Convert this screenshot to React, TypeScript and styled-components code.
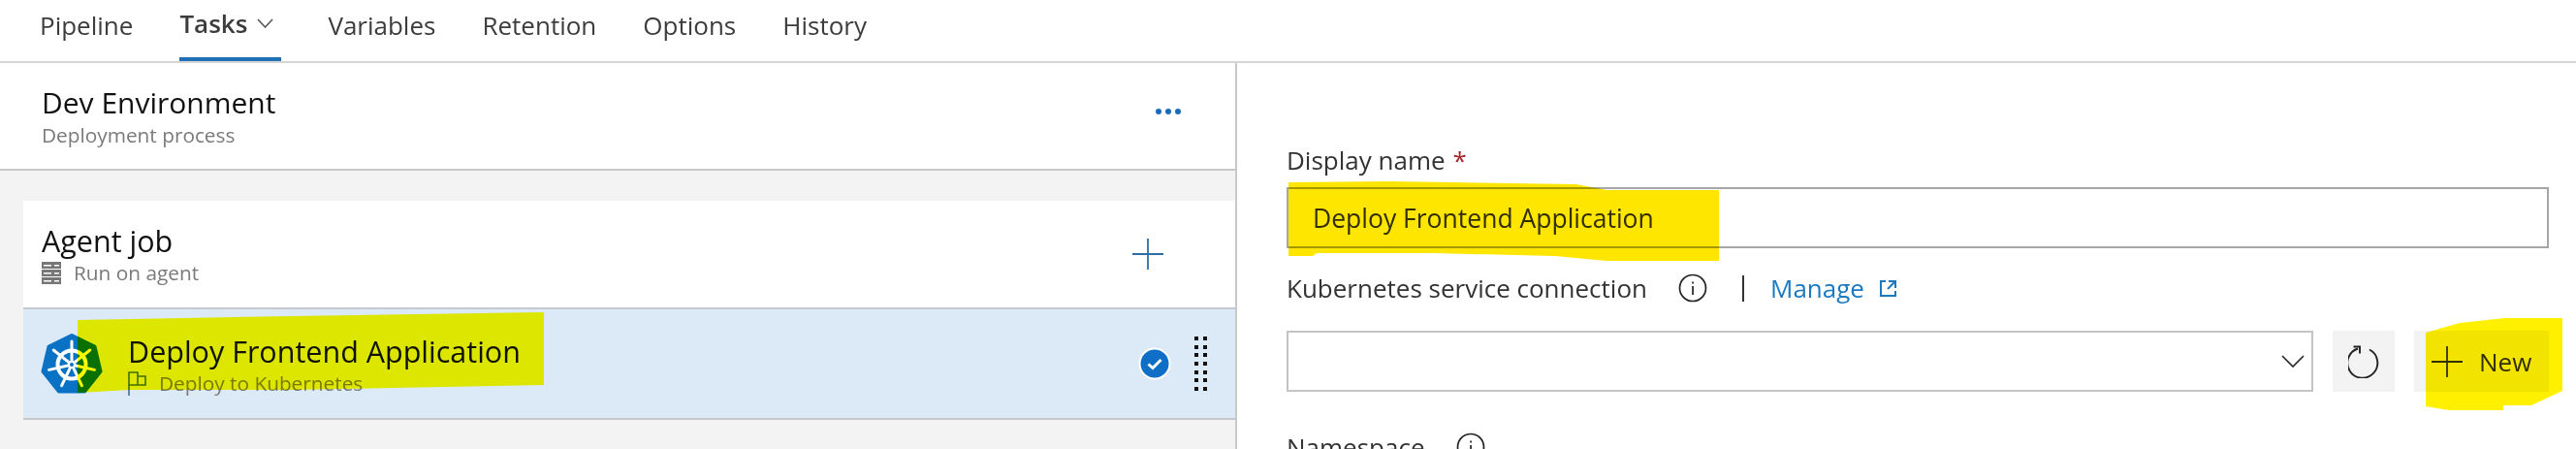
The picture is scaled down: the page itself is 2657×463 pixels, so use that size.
import React from 'react';
import styled, { createGlobalStyle } from 'styled-components';

const GlobalStyle = createGlobalStyle`
  html, body { margin: 0; background: #fff; }
  * { box-sizing: border-box; }
`;

const Page = styled.div`
  position: relative;
  width: 2657px;
  height: 463px;
  overflow: hidden;
  display: flex;
  flex-direction: column;
  background: #fff;
  font-family: 'Open Sans', 'Noto Sans', sans-serif;
  color: #333;
`;

const Nav = styled.nav`
  flex: none;
  height: 65px;
  display: flex;
  gap: 48px;
  padding-left: 41px;
  border-bottom: 2px solid #d4d4d4;
`;

const Tab = styled.div<{ $active?: boolean }>`
  height: 63px;
  display: flex;
  align-items: center;
  gap: 10px;
  padding: 0 ${p => (p.$active ? '8px' : '0')} 12px 0;
  font-size: 26px;
  font-weight: ${p => (p.$active ? 600 : 400)};
  color: #3c3c3c;
  border-bottom: ${p => (p.$active ? '4px solid #1f70b7' : 'none')};
`;

const Body = styled.div`
  flex: 1;
  min-height: 0;
  display: flex;
`;

const LeftPanel = styled.section`
  flex: none;
  width: 1276px;
  display: flex;
  flex-direction: column;
  background: #f3f3f3;
  border-right: 2px solid #c8c8c8;
`;

const ProcessHeader = styled.header`
  flex: none;
  height: 111px;
  display: flex;
  align-items: flex-start;
  justify-content: space-between;
  padding: 22px 56px 0 43px;
  background: #fff;
  border-bottom: 2px solid #c8c8c8;
`;

const Title = styled.div`
  font-size: 30.5px;
  line-height: 38px;
  color: #111;
`;

const EnvironmentTitle = styled(Title)`
  font-size: 30px;
`;

const Sub = styled.div`
  display: flex;
  align-items: center;
  gap: 13px;
  font-size: 20.8px;
  line-height: 28px;
  color: #7a7a7a;
`;

const MoreDots = styled.div`
  display: flex;
  gap: 4px;
  margin-top: 25px;
`;

const Dot = styled.span`
  width: 6px;
  height: 6px;
  border-radius: 50%;
  background: #1a6cb8;
`;

const Tasks = styled.div`
  flex: none;
  margin: 31px 0 0 24px;
  display: flex;
  flex-direction: column;
`;

const JobRow = styled.div`
  flex: none;
  height: 112px;
  display: flex;
  align-items: center;
  justify-content: space-between;
  padding: 0 74px 0 19px;
  background: #fff;
  border-bottom: 2px solid #c4c8d0;
`;

const TaskRow = styled.div`
  flex: none;
  height: 114px;
  display: flex;
  align-items: center;
  padding: 0 29px 0 18px;
  background: #dce9f7;
  border-bottom: 2px solid #c4c8cc;
`;

const TaskText = styled.div`
  flex: 1;
  margin-left: 26px;
  padding-top: 2px;
`;

const Gripper = styled.div`
  display: grid;
  grid-template-columns: 4px 4px;
  grid-auto-rows: 4px;
  gap: 4.7px 5px;
  margin-left: 24px;
  span { background: #111; }
`;

const RightPanel = styled.section`
  flex: 1;
  min-width: 0;
  padding: 81px 28px 0 51px;
  display: flex;
  flex-direction: column;
`;

const LabelRow = styled.div`
  flex: none;
  height: 38px;
  display: flex;
  align-items: center;
  font-size: 26px;
  color: #333;
  white-space: nowrap;
`;

const Required = styled.span`
  margin-left: 8px;
  color: #a4262c;
`;

const TextInput = styled.div`
  flex: none;
  height: 63px;
  margin-top: 9px;
  padding-left: 25px;
  display: flex;
  align-items: center;
  border: 2px solid #a6a6a6;
  font-size: 26.5px;
  color: #333;
`;

const ConnectionLabel = styled(LabelRow)`
  margin-top: 22px;
`;

const Divider = styled.span`
  width: 2px;
  height: 27px;
  margin: 0 27px 0 36px;
  background: #333;
`;

const ManageLink = styled.a`
  margin-right: 16px;
  color: #1c79c0;
`;

const SelectRow = styled.div`
  flex: none;
  display: flex;
  gap: 20px;
  margin-top: 25px;
`;

const Select = styled.div`
  flex: 1;
  height: 63px;
  padding-right: 7px;
  display: flex;
  align-items: center;
  justify-content: flex-end;
  border: 2px solid #c4c4c4;
`;

const GrayButton = styled.div<{ $width: number }>`
  flex: none;
  width: ${p => p.$width}px;
  height: 63px;
  display: flex;
  align-items: center;
  gap: 17px;
  padding-left: ${p => (p.$width > 100 ? 18 : 16)}px;
  background: #f3f3f3;
  font-size: 26px;
  color: #333;
`;

const NamespaceLabel = styled(LabelRow)`
  margin-top: 38px;
`;

const Annotations = styled.svg`
  position: absolute;
  inset: 0;
  width: 2657px;
  height: 463px;
  mix-blend-mode: multiply;
  pointer-events: none;
`;

const InfoIcon = ({ left }: { left: number }) => (
  <svg width="30" height="30" viewBox="0 0 30 30" style={{ marginLeft: left, flex: 'none' }}>
    <circle cx="15" cy="15" r="13.5" fill="none" stroke="#222" strokeWidth="1.7" />
    <rect x="14.2" y="13" width="1.7" height="9" fill="#222" />
    <rect x="14.2" y="8.5" width="1.7" height="2" fill="#222" />
  </svg>
);

const PlusIcon = ({ color }: { color: string }) => (
  <svg width="32" height="32" viewBox="0 0 32 32" style={{ flex: 'none' }}>
    <path d="M0 16H32M16 0V32" stroke={color} strokeWidth="1.8" />
  </svg>
);

const ServerIcon = () => (
  <svg width="20" height="23" viewBox="0 0 20 23">
    {[0, 8, 16].map(y => (
      <g key={y}>
        <rect y={y} width="20" height="7" fill="#777" />
        <rect x="2" y={y + 3} width="8" height="1.5" fill="#fff" />
        <rect x="13" y={y + 3} width="5" height="1.5" fill="#fff" />
      </g>
    ))}
  </svg>
);

const FlagIcon = () => (
  <svg width="19" height="25" viewBox="0 0 19 25" style={{ flex: 'none' }}>
    <path d="M1 25V1H10V14H1M10 5H18V14H10V11" fill="none" stroke="#3f6f8c" strokeWidth="1.6" />
  </svg>
);

const ExternalIcon = () => (
  <svg width="17" height="18" viewBox="0 0 17 18" style={{ flex: 'none' }}>
    <path d="M6 2H1V17H16V12M9 2H16V9M16 2L8 10" fill="none" stroke="#1c79c0" strokeWidth="2" />
  </svg>
);

const RefreshIcon = () => (
  <svg width="34" height="34" viewBox="0 0 34 34" style={{ flex: 'none' }}>
    <path d="M22 4.5A15.5 15.5 0 1 1 10 3.5" fill="none" stroke="#222" strokeWidth="1.9" />
    <path d="M5.5 1.5H12V8.5" fill="none" stroke="#222" strokeWidth="1.9" />
  </svg>
);

const Chevron = ({ w, h, color }: { w: number; h: number; color: string }) => (
  <svg width={w} height={h} viewBox={`0 0 ${w} ${h}`} style={{ flex: 'none' }}>
    <path d={`M1 1L${w / 2} ${h - 1}L${w - 1} 1`} fill="none" stroke={color} strokeWidth="1.6" />
  </svg>
);

const CheckBadge = () => (
  <svg width="34" height="34" viewBox="0 0 34 34" style={{ flex: 'none' }}>
    <circle cx="17" cy="17" r="16.5" fill="#fff" />
    <circle cx="17" cy="17" r="14.5" fill="#0f6fc6" />
    <path d="M10.5 17.5L15 21.5L23.5 13" fill="none" stroke="#fff" strokeWidth="3" />
  </svg>
);

const spokes = [0, 1, 2, 3, 4, 5, 6].map(i => (i * 2 * Math.PI) / 7 - Math.PI / 2);

// seven sided kubernetes badge, wheel computed from the spoke angles
const KubernetesLogo = () => (
  <svg width="64" height="64" viewBox="0 0 64 64" style={{ flex: 'none' }}>
    <path
      d="M32 3L55.5 14.5L61.5 40L45.2 60.5H18.8L2.5 40L8.5 14.5Z"
      fill="#0a72c4"
      stroke="#0a72c4"
      strokeWidth="4"
      strokeLinejoin="round"
    />
    <circle cx="32" cy="33" r="14.5" fill="none" stroke="#fff" strokeWidth="4" />
    {spokes.map(a => (
      <path
        key={a}
        d={`M${32 + 3 * Math.cos(a)} ${33 + 3 * Math.sin(a)}L${32 + 24 * Math.cos(a)} ${33 + 24 * Math.sin(a)}`}
        stroke="#fff"
        strokeWidth="3"
        strokeLinecap="round"
      />
    ))}
    <circle cx="32" cy="33" r="4" fill="#fff" />
    <circle cx="32" cy="33" r="2" fill="#0a72c4" />
  </svg>
);

export default function App() {
  return (
    <Page>
      <GlobalStyle />
      <Nav>
        <Tab>Pipeline</Tab>
        <Tab $active>
          Tasks <Chevron w={17} h={10} color="#555" />
        </Tab>
        <Tab>Variables</Tab>
        <Tab>Retention</Tab>
        <Tab>Options</Tab>
        <Tab>History</Tab>
      </Nav>
      <Body>
        <LeftPanel>
          <ProcessHeader>
            <div>
              <EnvironmentTitle>Dev Environment</EnvironmentTitle>
              <Sub>Deployment process</Sub>
            </div>
            <MoreDots>
              <Dot />
              <Dot />
              <Dot />
            </MoreDots>
          </ProcessHeader>
          <Tasks>
            <JobRow>
              <div>
                <Title>Agent job</Title>
                <Sub>
                  <ServerIcon />
                  Run on agent
                </Sub>
              </div>
              <PlusIcon color="#2e6da4" />
            </JobRow>
            <TaskRow>
              <KubernetesLogo />
              <TaskText>
                <Title>Deploy Frontend Application</Title>
                <Sub>
                  <FlagIcon />
                  Deploy to Kubernetes
                </Sub>
              </TaskText>
              <CheckBadge />
              <Gripper>
                {Array.from({ length: 14 }, (_, i) => (
                  <span key={i} />
                ))}
              </Gripper>
            </TaskRow>
          </Tasks>
        </LeftPanel>
        <RightPanel>
          <LabelRow>
            Display name<Required>*</Required>
          </LabelRow>
          <TextInput>Deploy Frontend Application</TextInput>
          <ConnectionLabel>
            Kubernetes service connection
            <InfoIcon left={32} />
            <Divider />
            <ManageLink>Manage</ManageLink>
            <ExternalIcon />
          </ConnectionLabel>
          <SelectRow>
            <Select>
              <Chevron w={24} h={13} color="#222" />
            </Select>
            <GrayButton $width={64}>
              <RefreshIcon />
            </GrayButton>
            <GrayButton $width={139}>
              <PlusIcon color="#333" />
              New
            </GrayButton>
          </SelectRow>
          <NamespaceLabel>
            Namespace
            <InfoIcon left={32} />
          </NamespaceLabel>
        </RightPanel>
      </Body>
      <Annotations viewBox="0 0 2657 463">
        <path d="M80 330L300 326L561 322V397L300 402L134 402L80 405Z" fill="#fffc00" />
        <path d="M1329 188L1434 187L1626 190L1657 196H1773V269H1657L1604 264L1478 261L1358 261L1354 264H1329Z" fill="#ffe600" />
        <path d="M2502 343L2537 333L2583 328H2643V403L2611 418H2582V423H2526L2502 419Z" fill="#fff000" />
      </Annotations>
    </Page>
  );
}
